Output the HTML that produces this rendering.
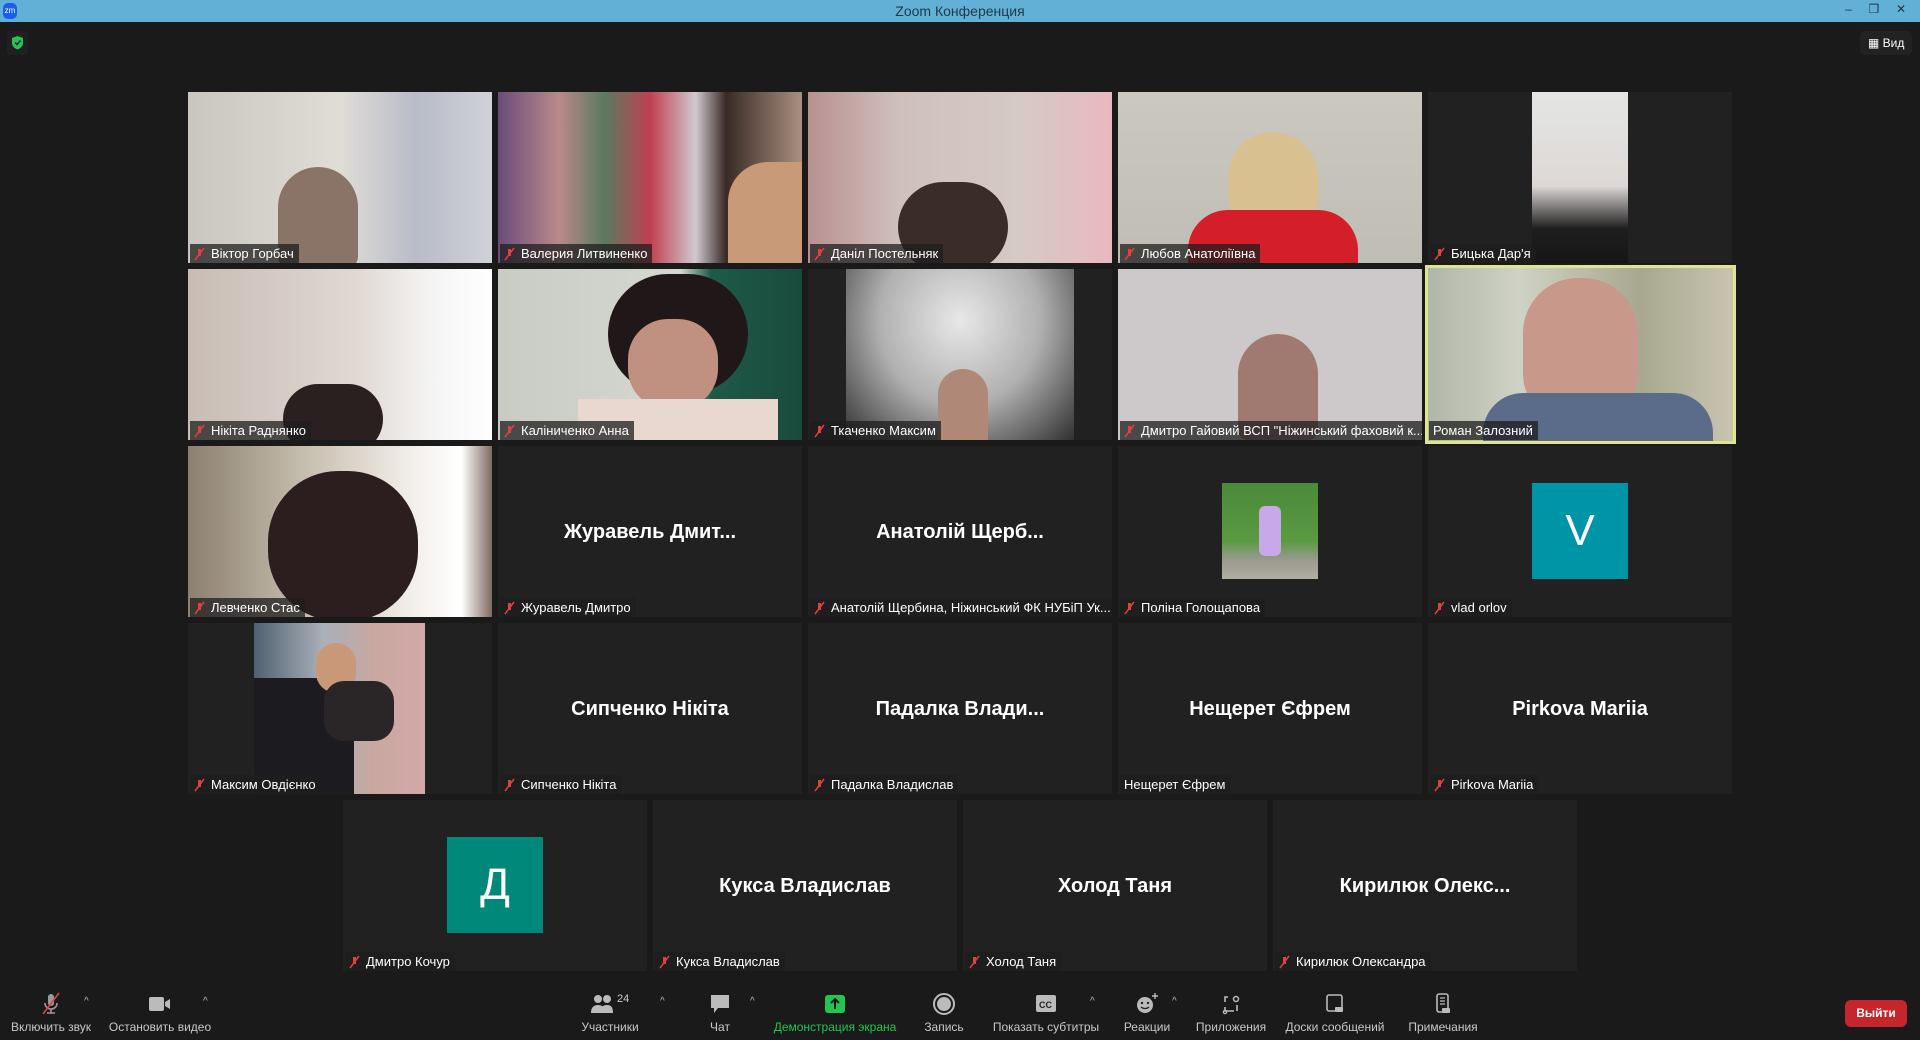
<!DOCTYPE html>
<html><head><meta charset="utf-8">
<style>
*{margin:0;padding:0;box-sizing:border-box}
body{width:1920px;height:1040px;background:#1a1a1a;position:relative;overflow:hidden;font-family:"Liberation Sans","DejaVu Sans",sans-serif;color:#fff}
.title{position:absolute;left:0;top:0;width:1920px;height:22px;background:#62b0d6;color:#1d3a4a;font-size:14px;text-align:center;line-height:22px}
.t{position:absolute;width:304px;height:171px;background:#212121;overflow:hidden}
.lab{position:absolute;left:2px;bottom:0;height:19px;background:rgba(30,30,30,0.75);font-size:13px;line-height:19px;padding:0 5px 0 4px;white-space:nowrap;display:flex;align-items:center;color:#fff}
.lab svg{margin-right:6px}
.big{position:absolute;left:0;top:0;width:100%;height:172px;display:flex;align-items:center;justify-content:center;font-weight:bold;font-size:20px;color:#fff}
.av{position:absolute;left:104px;top:37px;width:96px;height:96px;display:flex;align-items:center;justify-content:center;font-size:44px;color:#fff}
.tb{position:absolute;top:980px;left:0;width:1920px;height:60px;background:#1a1a1a}
.btn{position:absolute;top:1020px;font-size:12px;color:#c8c8c8;transform:translateX(-50%);white-space:nowrap}
.ic{position:absolute;top:992px;transform:translateX(-50%)}
.car{position:absolute;top:996px;font-size:10px;color:#bbb}
</style></head><body>
<div class="title">Zoom Конференция</div>
<div style="position:absolute;left:3px;top:3px;width:14px;height:16px;border-radius:5px;background:#1a5ef0;font-size:8px;color:#fff;line-height:16px;text-align:center">zm</div>
<div style="position:absolute;right:14px;top:2px;color:#234;font-size:12px">&#8211;&nbsp;&nbsp;&nbsp;&nbsp;&nbsp;&#10064;&nbsp;&nbsp;&nbsp;&nbsp;&nbsp;&#10005;</div>
<div style="position:absolute;left:7px;top:31px;width:21px;height:24px;border-radius:4px;background:#202020"><svg width="21" height="24" viewBox="0 0 21 24"><path d="M10.5 5 L16 7 V12 C16 15 13.5 17.5 10.5 18.5 C7.5 17.5 5 15 5 12 V7 Z" fill="#23c552"/><path d="M8 11.5 L10 13.5 L13.5 9.5" stroke="#123" stroke-width="1.6" fill="none"/></svg></div>
<div style="position:absolute;left:1860px;top:31px;width:52px;height:24px;border-radius:5px;background:#222;font-size:12px;line-height:24px;padding-left:8px">&#9638; Вид</div>

<!-- ROW 1 -->
<div class="t" style="left:188px;top:92px;background:linear-gradient(90deg,#c9c6c0 0%,#e0ddd6 50%,#b8bcc8 75%,#d0d2d8 100%)"><div style="position:absolute;left:90px;top:75px;width:80px;height:100px;border-radius:40px 40px 10px 10px;background:#8a7468"></div><div class="lab"><svg width="11" height="14"><path d="M4 2h3v7H4z" fill="#e04040"/><path d="M1 13L10 1" stroke="#e04040" stroke-width="1.5"/></svg>Віктор Горбач</div></div>
<div class="t" style="left:498px;top:92px;background:linear-gradient(90deg,#6a4c7a 0%,#b88a8a 20%,#5a7a60 35%,#c04050 50%,#d0c8d0 65%,#3a2a26 75%,#a89080 100%)"><div style="position:absolute;left:230px;top:70px;width:80px;height:110px;border-radius:40px 0 0 0;background:#c89a78"></div><div class="lab"><svg width="11" height="14"><path d="M4 2h3v7H4z" fill="#e04040"/><path d="M1 13L10 1" stroke="#e04040" stroke-width="1.5"/></svg>Валерия Литвиненко</div></div>
<div class="t" style="left:808px;top:92px;background:linear-gradient(90deg,#b89090 0%,#cfc0bc 30%,#d6cac6 70%,#e8b8c0 100%)"><div style="position:absolute;left:90px;top:90px;width:110px;height:90px;border-radius:50px;background:#3a2c28"></div><div class="lab"><svg width="11" height="14"><path d="M4 2h3v7H4z" fill="#e04040"/><path d="M1 13L10 1" stroke="#e04040" stroke-width="1.5"/></svg>Даніл Постельняк</div></div>
<div class="t" style="left:1118px;top:92px;background:linear-gradient(180deg,#cbc8c0,#c0bdb4)"><div style="position:absolute;left:110px;top:40px;width:90px;height:110px;border-radius:45px;background:#d8c090"></div><div style="position:absolute;left:70px;top:118px;width:170px;height:60px;border-radius:40px 40px 0 0;background:#d41e2a"></div><div class="lab"><svg width="11" height="14"><path d="M4 2h3v7H4z" fill="#e04040"/><path d="M1 13L10 1" stroke="#e04040" stroke-width="1.5"/></svg>Любов Анатоліївна</div></div>
<div class="t" style="left:1428px;top:92px"><div style="position:absolute;left:104px;top:0;width:96px;height:171px;background:linear-gradient(180deg,#e4e6e4 0%,#ddd8d6 55%,#1e1e1e 80%,#161616 100%)"></div><div class="lab"><svg width="11" height="14"><path d="M4 2h3v7H4z" fill="#e04040"/><path d="M1 13L10 1" stroke="#e04040" stroke-width="1.5"/></svg>Бицька Дар'я</div></div>

<!-- ROW 2 -->
<div class="t" style="left:188px;top:269px;background:linear-gradient(90deg,#c8bcb4 0%,#e0d8d2 55%,#f4f4f4 80%,#ffffff 100%)"><div style="position:absolute;left:95px;top:115px;width:100px;height:70px;border-radius:40px;background:#2a2020"></div><div class="lab"><svg width="11" height="14"><path d="M4 2h3v7H4z" fill="#e04040"/><path d="M1 13L10 1" stroke="#e04040" stroke-width="1.5"/></svg>Нікіта Раднянко</div></div>
<div class="t" style="left:498px;top:269px;background:linear-gradient(90deg,#c8ccc4 0%,#d4d8d0 60%,#1e5a48 70%,#1a4a3c 100%)"><div style="position:absolute;left:110px;top:5px;width:140px;height:120px;border-radius:60px;background:#201818"></div><div style="position:absolute;left:130px;top:50px;width:90px;height:90px;border-radius:40px;background:#c09080"></div><div style="position:absolute;left:80px;top:130px;width:200px;height:50px;background:#e8d8d0"></div><div class="lab"><svg width="11" height="14"><path d="M4 2h3v7H4z" fill="#e04040"/><path d="M1 13L10 1" stroke="#e04040" stroke-width="1.5"/></svg>Каліниченко Анна</div></div>
<div class="t" style="left:808px;top:269px"><div style="position:absolute;left:38px;top:0;width:228px;height:171px;background:radial-gradient(ellipse at 50% 30%,#e8e8e8 0%,#b0b0b0 50%,#303030 100%)"></div><div style="position:absolute;left:130px;top:100px;width:50px;height:71px;border-radius:25px 25px 0 0;background:#b08878"></div><div class="lab"><svg width="11" height="14"><path d="M4 2h3v7H4z" fill="#e04040"/><path d="M1 13L10 1" stroke="#e04040" stroke-width="1.5"/></svg>Ткаченко Максим</div></div>
<div class="t" style="left:1118px;top:269px;background:#cdc9ca"><div style="position:absolute;left:120px;top:65px;width:80px;height:106px;border-radius:40px 40px 10px 10px;background:#a07a70"></div><div class="lab"><svg width="11" height="14"><path d="M4 2h3v7H4z" fill="#e04040"/><path d="M1 13L10 1" stroke="#e04040" stroke-width="1.5"/></svg>Дмитро Гайовий ВСП "Ніжинський фаховий к...</div></div>
<div class="t" style="left:1425px;top:265px;width:311px;height:179px;border:3px solid #dfe68a;background:linear-gradient(90deg,#b0b6a8 0%,#cfd2c4 30%,#a8a890 70%,#c8c4b0 100%)"><div style="position:absolute;left:95px;top:10px;width:115px;height:150px;border-radius:55px;background:#c8988a"></div><div style="position:absolute;left:55px;top:125px;width:230px;height:60px;border-radius:40px 40px 0 0;background:#5a6c8a"></div><div class="lab" style="left:1px;bottom:1px">Роман Залозний</div></div>

<!-- ROW 3 -->
<div class="t" style="left:188px;top:446px;background:linear-gradient(90deg,#8c8070 0%,#c8c0b0 40%,#f4f0ec 75%,#fff 90%,#806a60 100%)"><div style="position:absolute;left:80px;top:25px;width:150px;height:150px;border-radius:70px;background:#2c1e1e"></div><div class="lab"><svg width="11" height="14"><path d="M4 2h3v7H4z" fill="#e04040"/><path d="M1 13L10 1" stroke="#e04040" stroke-width="1.5"/></svg>Левченко Стас</div></div>
<div class="t" style="left:498px;top:446px"><div class="big">Журавель Дмит...</div><div class="lab"><svg width="11" height="14"><path d="M4 2h3v7H4z" fill="#e04040"/><path d="M1 13L10 1" stroke="#e04040" stroke-width="1.5"/></svg>Журавель Дмитро</div></div>
<div class="t" style="left:808px;top:446px"><div class="big">Анатолій Щерб...</div><div class="lab"><svg width="11" height="14"><path d="M4 2h3v7H4z" fill="#e04040"/><path d="M1 13L10 1" stroke="#e04040" stroke-width="1.5"/></svg>Анатолій Щербина, Ніжинський ФК НУБіП Ук...</div></div>
<div class="t" style="left:1118px;top:446px"><div class="av" style="background:linear-gradient(180deg,#4a8a3a 0%,#5a9a40 60%,#9a9a90 80%,#b0aca0 100%)"><div style="width:22px;height:50px;background:#c8a8e8;border-radius:6px"></div></div><div class="lab"><svg width="11" height="14"><path d="M4 2h3v7H4z" fill="#e04040"/><path d="M1 13L10 1" stroke="#e04040" stroke-width="1.5"/></svg>Поліна Голощапова</div></div>
<div class="t" style="left:1428px;top:446px"><div class="av" style="background:#0095a6">V</div><div class="lab"><svg width="11" height="14"><path d="M4 2h3v7H4z" fill="#e04040"/><path d="M1 13L10 1" stroke="#e04040" stroke-width="1.5"/></svg>vlad orlov</div></div>

<!-- ROW 4 -->
<div class="t" style="left:188px;top:623px"><div style="position:absolute;left:66px;top:0;width:171px;height:171px;background:linear-gradient(90deg,#506070 0%,#a8b0b8 40%,#c8a8a0 70%,#d4a8a8 100%)"></div><div style="position:absolute;left:66px;top:55px;width:100px;height:116px;background:#1c1c20"></div><div style="position:absolute;left:128px;top:20px;width:40px;height:50px;border-radius:20px;background:#c89878"></div><div style="position:absolute;left:136px;top:58px;width:70px;height:60px;border-radius:20px;background:#2a2628"></div><div class="lab"><svg width="11" height="14"><path d="M4 2h3v7H4z" fill="#e04040"/><path d="M1 13L10 1" stroke="#e04040" stroke-width="1.5"/></svg>Максим Овдієнко</div></div>
<div class="t" style="left:498px;top:623px"><div class="big">Сипченко Нікіта</div><div class="lab"><svg width="11" height="14"><path d="M4 2h3v7H4z" fill="#e04040"/><path d="M1 13L10 1" stroke="#e04040" stroke-width="1.5"/></svg>Сипченко Нікіта</div></div>
<div class="t" style="left:808px;top:623px"><div class="big">Падалка  Влади...</div><div class="lab"><svg width="11" height="14"><path d="M4 2h3v7H4z" fill="#e04040"/><path d="M1 13L10 1" stroke="#e04040" stroke-width="1.5"/></svg>Падалка Владислав</div></div>
<div class="t" style="left:1118px;top:623px"><div class="big">Нещерет Єфрем</div><div class="lab">Нещерет Єфрем</div></div>
<div class="t" style="left:1428px;top:623px"><div class="big">Pirkova Mariia</div><div class="lab"><svg width="11" height="14"><path d="M4 2h3v7H4z" fill="#e04040"/><path d="M1 13L10 1" stroke="#e04040" stroke-width="1.5"/></svg>Pirkova Mariia</div></div>

<!-- ROW 5 -->
<div class="t" style="left:343px;top:800px"><div class="av" style="background:#00897b">Д</div><div class="lab"><svg width="11" height="14"><path d="M4 2h3v7H4z" fill="#e04040"/><path d="M1 13L10 1" stroke="#e04040" stroke-width="1.5"/></svg>Дмитро Кочур</div></div>
<div class="t" style="left:653px;top:800px"><div class="big">Кукса Владислав</div><div class="lab"><svg width="11" height="14"><path d="M4 2h3v7H4z" fill="#e04040"/><path d="M1 13L10 1" stroke="#e04040" stroke-width="1.5"/></svg>Кукса Владислав</div></div>
<div class="t" style="left:963px;top:800px"><div class="big">Холод Таня</div><div class="lab"><svg width="11" height="14"><path d="M4 2h3v7H4z" fill="#e04040"/><path d="M1 13L10 1" stroke="#e04040" stroke-width="1.5"/></svg>Холод Таня</div></div>
<div class="t" style="left:1273px;top:800px"><div class="big">Кирилюк  Олекс...</div><div class="lab"><svg width="11" height="14"><path d="M4 2h3v7H4z" fill="#e04040"/><path d="M1 13L10 1" stroke="#e04040" stroke-width="1.5"/></svg>Кирилюк Олександра</div></div>

<!-- TOOLBAR -->
<div class="tb"></div>
<svg class="ic" style="left:51px" width="24" height="24"><rect x="9" y="2" width="6" height="12" rx="3" fill="#9a9a9a"/><path d="M6 11c0 4 3 6 6 6s6-2 6-6M12 17v4M8 21h8" stroke="#9a9a9a" stroke-width="1.6" fill="none"/><path d="M4 22L20 1" stroke="#e04040" stroke-width="1.6"/></svg>
<div class="car" style="left:84px">^</div>
<div class="btn" style="left:51px">Включить звук</div>
<svg class="ic" style="left:160px" width="26" height="24"><rect x="2" y="5" width="15" height="14" rx="2" fill="#bbb"/><path d="M18 10l5-3v10l-5-3z" fill="#bbb"/></svg>
<div class="car" style="left:203px">^</div>
<div class="btn" style="left:160px">Остановить видео</div>
<svg class="ic" style="left:610px" width="40" height="24"><circle cx="8" cy="7" r="4" fill="#bbb"/><circle cx="17" cy="7" r="4" fill="#bbb"/><path d="M1 21c0-6 3-8 7-8s7 2 7 8zM10 21c0-6 3-8 7-8s6 2 6 8z" fill="#bbb"/><text x="27" y="10" font-size="11" fill="#ccc" font-family="Liberation Sans">24</text></svg>
<div class="car" style="left:660px">^</div>
<div class="btn" style="left:610px">Участники</div>
<svg class="ic" style="left:720px" width="24" height="24"><path d="M3 3h18v13H10l-4 5v-5H3z" fill="#bbb"/></svg>
<div class="car" style="left:750px">^</div>
<div class="btn" style="left:720px">Чат</div>
<svg class="ic" style="left:835px" width="24" height="24"><rect x="2" y="3" width="20" height="18" rx="3" fill="#23c552"/><path d="M12 17V8M8 11l4-4 4 4" stroke="#111" stroke-width="2" fill="none"/></svg>
<div class="btn" style="left:835px;color:#23c552">Демонстрация экрана</div>
<svg class="ic" style="left:944px" width="24" height="24"><circle cx="12" cy="12" r="10" fill="none" stroke="#bbb" stroke-width="2"/><circle cx="12" cy="12" r="7" fill="#bbb"/></svg>
<div class="btn" style="left:944px">Запись</div>
<svg class="ic" style="left:1046px" width="26" height="24"><rect x="3" y="3" width="20" height="17" rx="2" fill="#bbb"/><text x="6" y="16" font-size="9" font-weight="bold" fill="#222" font-family="Liberation Sans">CC</text></svg>
<div class="car" style="left:1090px">^</div>
<div class="btn" style="left:1046px">Показать субтитры</div>
<svg class="ic" style="left:1147px" width="26" height="24"><circle cx="11" cy="13" r="8" fill="#bbb"/><circle cx="8" cy="11" r="1.2" fill="#222"/><circle cx="14" cy="11" r="1.2" fill="#222"/><path d="M7 15c2 2 6 2 8 0" stroke="#222" stroke-width="1.3" fill="none"/><path d="M21 1v6M18 4h6" stroke="#bbb" stroke-width="1.4"/></svg>
<div class="car" style="left:1172px">^</div>
<div class="btn" style="left:1147px">Реакции</div>
<svg class="ic" style="left:1231px" width="24" height="24"><path d="M9 5H6v5M6 15v4h9M18 13v6" stroke="#bbb" stroke-width="1.6" fill="none"/><circle cx="17" cy="7" r="2.5" fill="none" stroke="#bbb" stroke-width="1.5"/><circle cx="6" cy="20" r="1.6" fill="none" stroke="#bbb" stroke-width="1.3"/></svg>
<div class="btn" style="left:1231px">Приложения</div>
<svg class="ic" style="left:1335px" width="24" height="24"><rect x="4" y="3" width="15" height="16" rx="2" fill="none" stroke="#bbb" stroke-width="1.6"/><rect x="12" y="15" width="8" height="5" rx="1" fill="#bbb"/></svg>
<div class="btn" style="left:1335px">Доски сообщений</div>
<svg class="ic" style="left:1443px" width="24" height="24"><rect x="6" y="2" width="11" height="18" rx="2" fill="none" stroke="#bbb" stroke-width="1.6"/><path d="M9 6h5M9 9h5M9 12h5" stroke="#bbb" stroke-width="1.2"/><rect x="11" y="16" width="8" height="5" rx="1" fill="#bbb"/></svg>
<div class="btn" style="left:1443px">Примечания</div>
<div style="position:absolute;left:1845px;top:1000px;width:62px;height:27px;border-radius:6px;background:#c4262b;font-size:12px;font-weight:bold;line-height:27px;text-align:center">Выйти</div>
</body></html>
